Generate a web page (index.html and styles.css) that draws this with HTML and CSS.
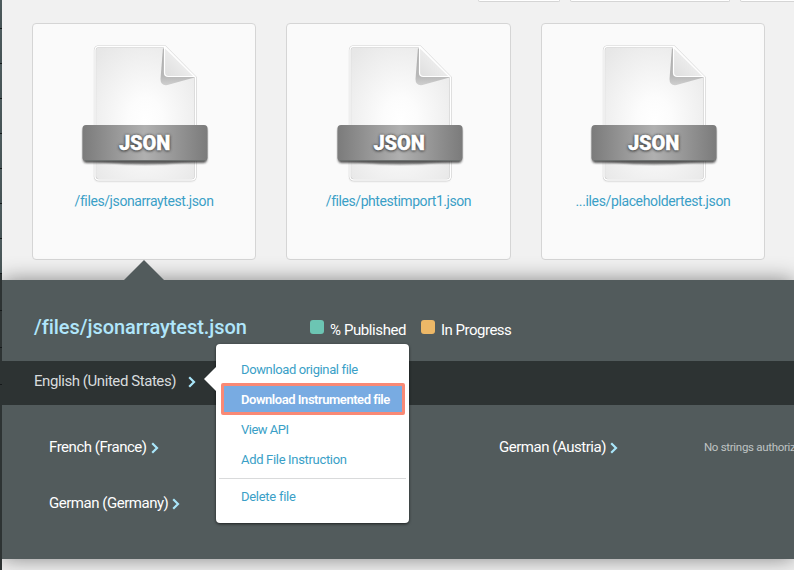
FILE: index.html
```
<!DOCTYPE html>
<html lang="en">
<head>
<meta charset="utf-8">
<title>Files</title>
<link rel="stylesheet" href="styles.css">
</head>
<body>
<svg class="defs" width="0" height="0" aria-hidden="true">
  <defs>
    <radialGradient id="paper" cx="50%" cy="55%" r="68%"><stop offset="0" stop-color="#fff"/><stop offset=".25" stop-color="#fcfcfc"/><stop offset="1" stop-color="#e7e7e7"/></radialGradient>
    <linearGradient id="ribbon"><stop offset="0" stop-color="#7b7b7b"/><stop offset=".5" stop-color="#b0b0b0"/><stop offset="1" stop-color="#7b7b7b"/></linearGradient>
    <linearGradient id="fold" x1="0" y1="1" x2="1" y2="0"><stop offset="0" stop-color="#dedede"/><stop offset="1" stop-color="#fafafa"/></linearGradient>
    <linearGradient id="foldshade" x1="0" y1="0" x2="0" y2="1"><stop offset="0" stop-color="#aaa"/><stop offset=".75" stop-color="#b8b8b8"/><stop offset="1" stop-color="#cfcfcf"/></linearGradient>
    <filter id="soft" x="-10%" y="-20%" width="120%" height="150%"><feGaussianBlur stdDeviation="1.1"/></filter>
    <symbol id="file" viewBox="0 0 132 142">
      <path d="M21 7h65l31 31v97a4 4 0 0 1-4 4h-92a4 4 0 0 1-4-4z" fill="#888" opacity=".6" filter="url(#soft)"/>
      <path d="M20.500 4.500h66.500l30.500 31v99a3.500 3.500 0 0 1-3.500 3.500h-93.500a3.500 3.500 0 0 1-3.500-3.500v-126.500a3.500 3.500 0 0 1 3.500-3.500z" fill="url(#paper)" stroke="#bfbfbf" stroke-width="2.200"/>
      <path d="M20.500 4.500h66.500l30.500 31v99a3.500 3.500 0 0 1-3.500 3.500h-93.500a3.500 3.500 0 0 1-3.500-3.500v-126.500a3.500 3.500 0 0 1 3.500-3.500z" fill="none" stroke="#fff" stroke-width="1.500"/>
      <path d="M85 6l-2.500 31q0 7 7 6l27-7.500z" fill="url(#foldshade)"/>
      <path d="M86.500 5v25.500q0 4 4 4h26z" fill="url(#fold)" stroke="#fff" stroke-width="1.200"/>
      <rect x="5" y="85" width="124" height="36" rx="4" fill="#222" opacity=".75" filter="url(#soft)"/>
      <path d="M20 119h94q-47 7-94 0z" fill="#444" opacity=".6" filter="url(#soft)"/>
      <rect x="4.500" y="83" width="125" height="36" rx="3.500" fill="url(#ribbon)"/>
      <path d="M7 118.500h120" stroke="#6c706f" stroke-width="1"/>
    </symbol>
    <symbol id="chev" viewBox="0 0 8 12"><path d="M1.200 1.200L6 6l-4.800 4.800" fill="none" stroke="#a9e6fa" stroke-width="2.200"/></symbol>
  </defs>
</svg>
<div class="app">
  <nav class="rail"><i></i><i></i><i></i><i></i><i></i><i></i><i></i><i></i><i></i><i></i><i></i></nav>
  <main class="main">
    <div class="toolbar"><span class="tool first"></span><span class="tool second"></span><span class="tool third"></span></div>
    <div class="cards">
      <article class="card"><div class="thumb"><svg><use href="#file"/></svg><span class="kind">JSON</span></div><a class="name n1">/files/jsonarraytest.json</a></article>
      <article class="card"><div class="thumb"><svg><use href="#file"/></svg><span class="kind">JSON</span></div><a class="name n2">/files/phtestimport1.json</a></article>
      <article class="card"><div class="thumb"><svg><use href="#file"/></svg><span class="kind">JSON</span></div><a class="name n3">...iles/placeholdertest.json</a></article>
    </div>
    <section class="panel">
      <header class="head">
        <h1>/files/jsonarraytest.json</h1>
        <span class="key"><b class="sw green"></b><span class="t-pub">% Published</span></span>
        <span class="key"><b class="sw amber"></b><span class="t-prog">In Progress</span></span>
      </header>
      <div class="source">
        <span class="t-en">English (United States)</span><svg class="chev"><use href="#chev"/></svg>
        <div class="menu">
          <a class="m1">Download original file</a>
          <a class="active">Download Instrumented file</a>
          <a class="m3">View API</a>
          <a class="m4">Add File Instruction</a>
          <hr>
          <a class="m5">Delete file</a>
        </div>
      </div>
      <div class="langs">
        <div class="lang"><span class="t-fr">French (France)</span><svg class="chev"><use href="#chev"/></svg></div>
        <div class="lang"><span class="t-at">German (Austria)</span><svg class="chev"><use href="#chev"/></svg><span class="note">No strings authoriz</span></div>
        <div class="lang"><span class="t-de">German (Germany)</span><svg class="chev"><use href="#chev"/></svg></div>
      </div>
    </section>
  </main>
</div>
</body>
</html>
```
FILE: styles.css
```
* { box-sizing: border-box; }
body { margin: 0; background: #f1f1f1; font-family: Roboto, "Liberation Sans", sans-serif; }
.defs { position: absolute; }
.app { display: flex; width: 794px; height: 570px; overflow: hidden; }
.rail { width: 2px; flex: none; background: #2d3333; overflow: hidden; }
.rail i { display: block; height: 35px; border-bottom: 1px solid #15191a; background: linear-gradient(#4e5c5e, #465355); }
.rail i:first-child { height: 29px; }
.rail i:nth-child(n+9) { height: 37px; background: #2d3333; }
.main { width: 792px; flex: none; overflow: hidden; }
.toolbar { height: 23px; display: flex; padding-left: 476px; }
.tool { flex: none; height: 2px; border: 1px solid #d5d5d5; border-top: 0; border-radius: 0 0 4px 4px; background: #fff; }
.first { width: 82px; }
.second { width: 160px; margin-left: 10px; }
.third { width: 100px; margin-left: 10px; }
.cards { display: grid; grid-template-columns: 224px 225px 224px; column-gap: 30px; padding-left: 30px; height: 257px; }
.card { height: 237px; border: 1px solid #d5d5d5; border-radius: 4px; background: #fafafa; display: flex; flex-direction: column; align-items: center; padding-top: 18px; }
.thumb { display: grid; width: 132px; height: 142px; }
.thumb svg { grid-area: 1 / 1; width: 132px; height: 142px; }
.kind { grid-area: 1 / 1; z-index: 1; padding: 89px 0 0 1px; text-align: center; font-size: 20px; line-height: 24px; font-weight: 900; color: #fff; -webkit-text-stroke: .4px #fff; letter-spacing: -.1px; text-shadow: 0 0 3px #333, 0 1px 3px #444; }
.name { margin-top: 7px; font-size: 14px; line-height: 20px; color: #3a9fc7; white-space: nowrap; }
.n1 { letter-spacing: -.4px; }
.n2 { letter-spacing: -.44px; }
.n3 { letter-spacing: -.37px; }
.panel { position: relative; height: 279px; background: #525b5c; box-shadow: 0 0 20px rgba(0,0,0,.45); }
.panel::before { content: ""; position: absolute; left: 122px; top: -20px; border: 20px solid transparent; border-top: 0; border-bottom-color: #525b5c; }
.head { height: 81px; padding: 15px 0 0 32px; display: flex; align-items: center; }
h1 { margin: 0; width: 276px; padding-bottom: 2px; font-size: 20px; line-height: 26px; font-weight: 500; letter-spacing: -.06px; color: #b0e6fb; white-space: nowrap; }
.key { display: flex; align-items: center; font-size: 15px; line-height: 20px; color: #fff; white-space: nowrap; width: 111px; padding-top: 3px; }
.t-pub { letter-spacing: -.4px; }
.t-prog { letter-spacing: -.5px; }
.sw { width: 14px; height: 14px; border-radius: 3px; margin: -5px 6px 0 0; flex: none; }
.green { background: #6cc5b3; }
.amber { background: #edb867; }
.source { position: relative; height: 44px; padding: 0 0 4px 32px; background: #2d3333; display: flex; align-items: center; color: #d8dcde; font-size: 15px; white-space: nowrap; }
.t-en { letter-spacing: -.43px; }
.chev { width: 8px; height: 12px; flex: none; margin: 2px 0 0 4px; }
.source .chev { margin-left: 11.500px; }
.menu { position: absolute; left: 214px; top: -17px; width: 193px; height: 179px; padding: 10px 3px 0; background: #fff; border-radius: 4px; box-shadow: 0 1px 3px rgba(0,0,0,.65); z-index: 2; }
.menu::before { content: ""; position: absolute; left: -12px; top: 23px; border: 12px solid transparent; border-left: 0; border-right-color: #fff; }
.menu a { display: block; height: 30px; line-height: 32px; padding-left: 22px; font-size: 13px; color: #3a9fc7; }
.menu .m1 { letter-spacing: -.37px; }
.menu .m3 { letter-spacing: -.5px; }
.menu .m4 { letter-spacing: -.32px; }
.menu .m5 { letter-spacing: -.28px; }
.menu .active { height: 32px; margin: -1px 1px -1px 2px; padding-left: 17px; line-height: 27px; border: 3px solid #f98975; border-radius: 2px; background: #78abe2; color: #fff; font-weight: 600; letter-spacing: -.46px; }
hr { height: 1px; border: 0; background: #d9dadb; margin: 4px 0 2px; }
.langs { display: grid; grid-template-columns: 450px 350px; grid-auto-rows: 56px; padding: 14px 0 0 47px; }
.lang { display: flex; align-items: center; font-size: 15px; color: #fff; white-space: nowrap; }
.t-fr, .t-de, .t-at { letter-spacing: -.47px; }
.note { font-size: 11.500px; letter-spacing: -.3px; color: #bfc3c3; margin-left: 86px; }
```
